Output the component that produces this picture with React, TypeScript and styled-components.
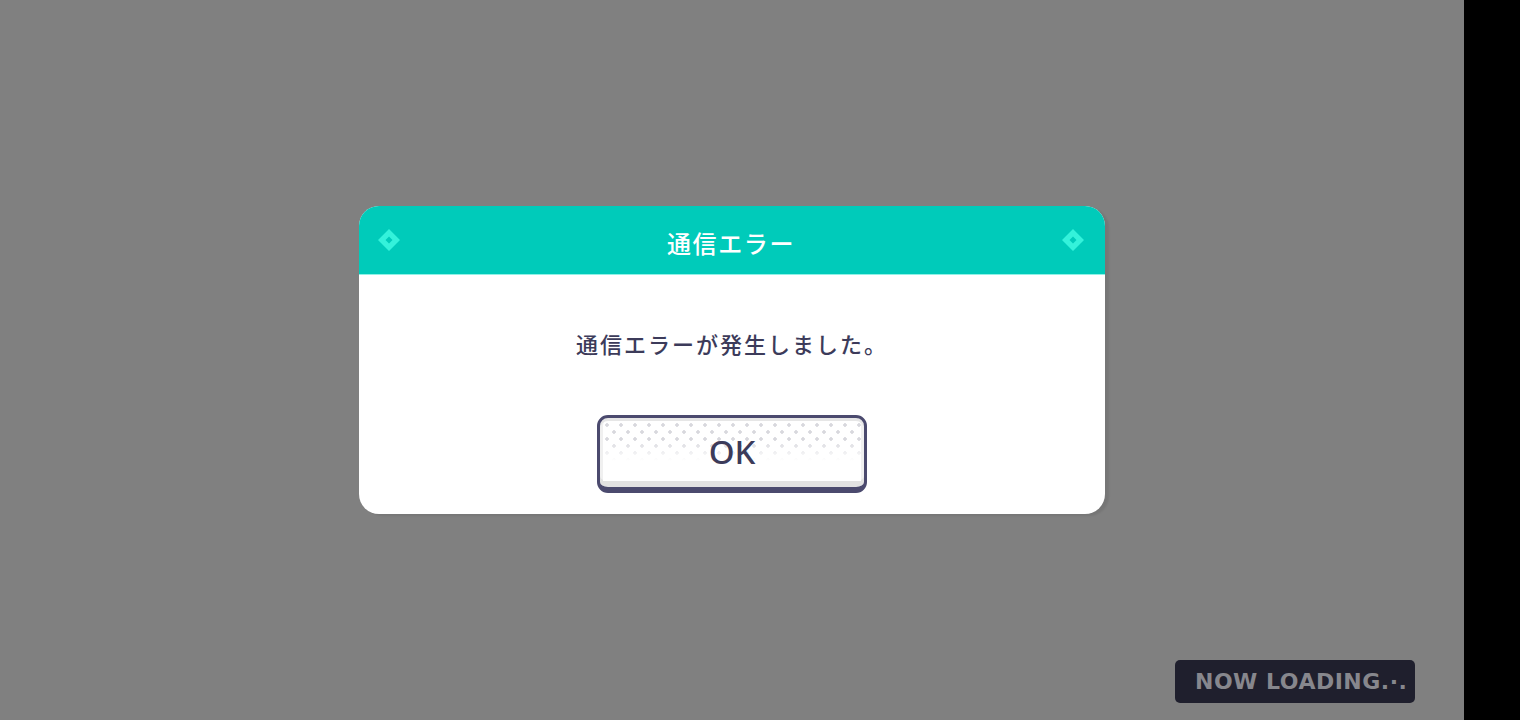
import styled, { createGlobalStyle } from 'styled-components'

const GlobalStyle = createGlobalStyle`
  html, body {
    margin: 0;
    padding: 0;
    background: #000;
  }
  body {
    font-family: "Noto Sans CJK JP", "Noto Sans", sans-serif;
  }
`

const Screen = styled.div`
  display: flex;
  width: 1520px;
  height: 720px;
  overflow: hidden;
`

const Stage = styled.div`
  position: relative;
  width: 1464px;
  height: 720px;
  background: #808080;
  display: flex;
  flex-direction: column;
  align-items: center;
`

const Edge = styled.div`
  flex: 1;
  background: #000;
`

const Dialog = styled.div`
  margin-top: 206px;
  width: 746px;
  height: 308px;
  border-radius: 20px;
  background: #fff;
  overflow: hidden;
  display: flex;
  flex-direction: column;
  box-shadow: 4px 2px 2px rgba(0, 0, 0, 0.08);
`

const Header = styled.div`
  height: 68px;
  flex-shrink: 0;
  background: #00cbba;
  border-bottom: 1px solid #8ff2e6;
  display: flex;
  align-items: center;
  justify-content: space-between;
  padding: 0 18px 0 16px;
`

const Title = styled.div`
  color: #fff;
  font-size: 24px;
  font-weight: 500;
  letter-spacing: 1.6px;
  margin-top: 4px;
`

const Body = styled.div`
  flex: 1;
  display: flex;
  flex-direction: column;
  align-items: center;
`

const Message = styled.div`
  margin-top: 52px;
  color: #3c3b5a;
  font-size: 22px;
  font-weight: 500;
  letter-spacing: 2px;
  line-height: 32px;
`

const OkButton = styled.button`
  margin-top: 56px;
  width: 270px;
  height: 78px;
  box-sizing: border-box;
  border: 3px solid #4b4a6e;
  border-bottom-width: 6px;
  border-radius: 11px;
  background:
    radial-gradient(circle, rgba(212, 212, 218, 0.9) 1.5px, transparent 2px) 0 0 / 14px 14px,
    radial-gradient(circle, rgba(212, 212, 218, 0.9) 1.5px, transparent 2px) 7px 7px / 14px 14px,
    #fff;
  box-shadow: inset 0 3px 0 #e6e6e6, inset 0 -6px 0 #e2e2e2, inset 3px 0 0 #f0f0f0, inset -3px 0 0 #f0f0f0;
  color: #3c3b5a;
  font-family: "Noto Sans", "Liberation Sans", sans-serif;
  font-size: 33px;
  font-weight: 500;
  padding: 0 0 2px;
  display: flex;
  align-items: center;
  justify-content: center;
  cursor: pointer;
  position: relative;
  overflow: hidden;

  &::after {
    content: '';
    position: absolute;
    left: 3px;
    right: 3px;
    top: 26px;
    bottom: 6px;
    background: linear-gradient(rgba(255, 255, 255, 0.2), #fff 45%);
  }
`

const Label = styled.span`
  position: relative;
  z-index: 1;
`

const Loading = styled.div`
  position: absolute;
  left: 1175px;
  top: 660px;
  width: 240px;
  height: 43px;
  box-sizing: border-box;
  border-radius: 5px;
  background: #1f1f2d;
  color: #87878d;
  font-family: "DejaVu Sans", "Liberation Sans", sans-serif;
  font-weight: 700;
  font-size: 22px;
  letter-spacing: 0.5px;
  display: flex;
  align-items: center;
  padding-left: 20px;
  white-space: nowrap;
`

function Diamond() {
  return (
    <svg width="28" height="28" viewBox="0 0 28 28">
      <path d="M14 3 L25 14 L14 25 L3 14 Z M14 10.5 L10.5 14 L14 17.5 L17.5 14 Z" fill="#34f2db" fillRule="evenodd" />
    </svg>
  )
}

export default function App() {
  return (
    <Screen>
      <GlobalStyle />
      <Stage>
        <Dialog>
          <Header>
            <Diamond />
            <Title>通信エラー</Title>
            <Diamond />
          </Header>
          <Body>
            <Message>通信エラーが発生しました。</Message>
            <OkButton>
              <Label>OK</Label>
            </OkButton>
          </Body>
        </Dialog>
        <Loading>NOW LOADING.·.</Loading>
      </Stage>
      <Edge />
    </Screen>
  )
}
